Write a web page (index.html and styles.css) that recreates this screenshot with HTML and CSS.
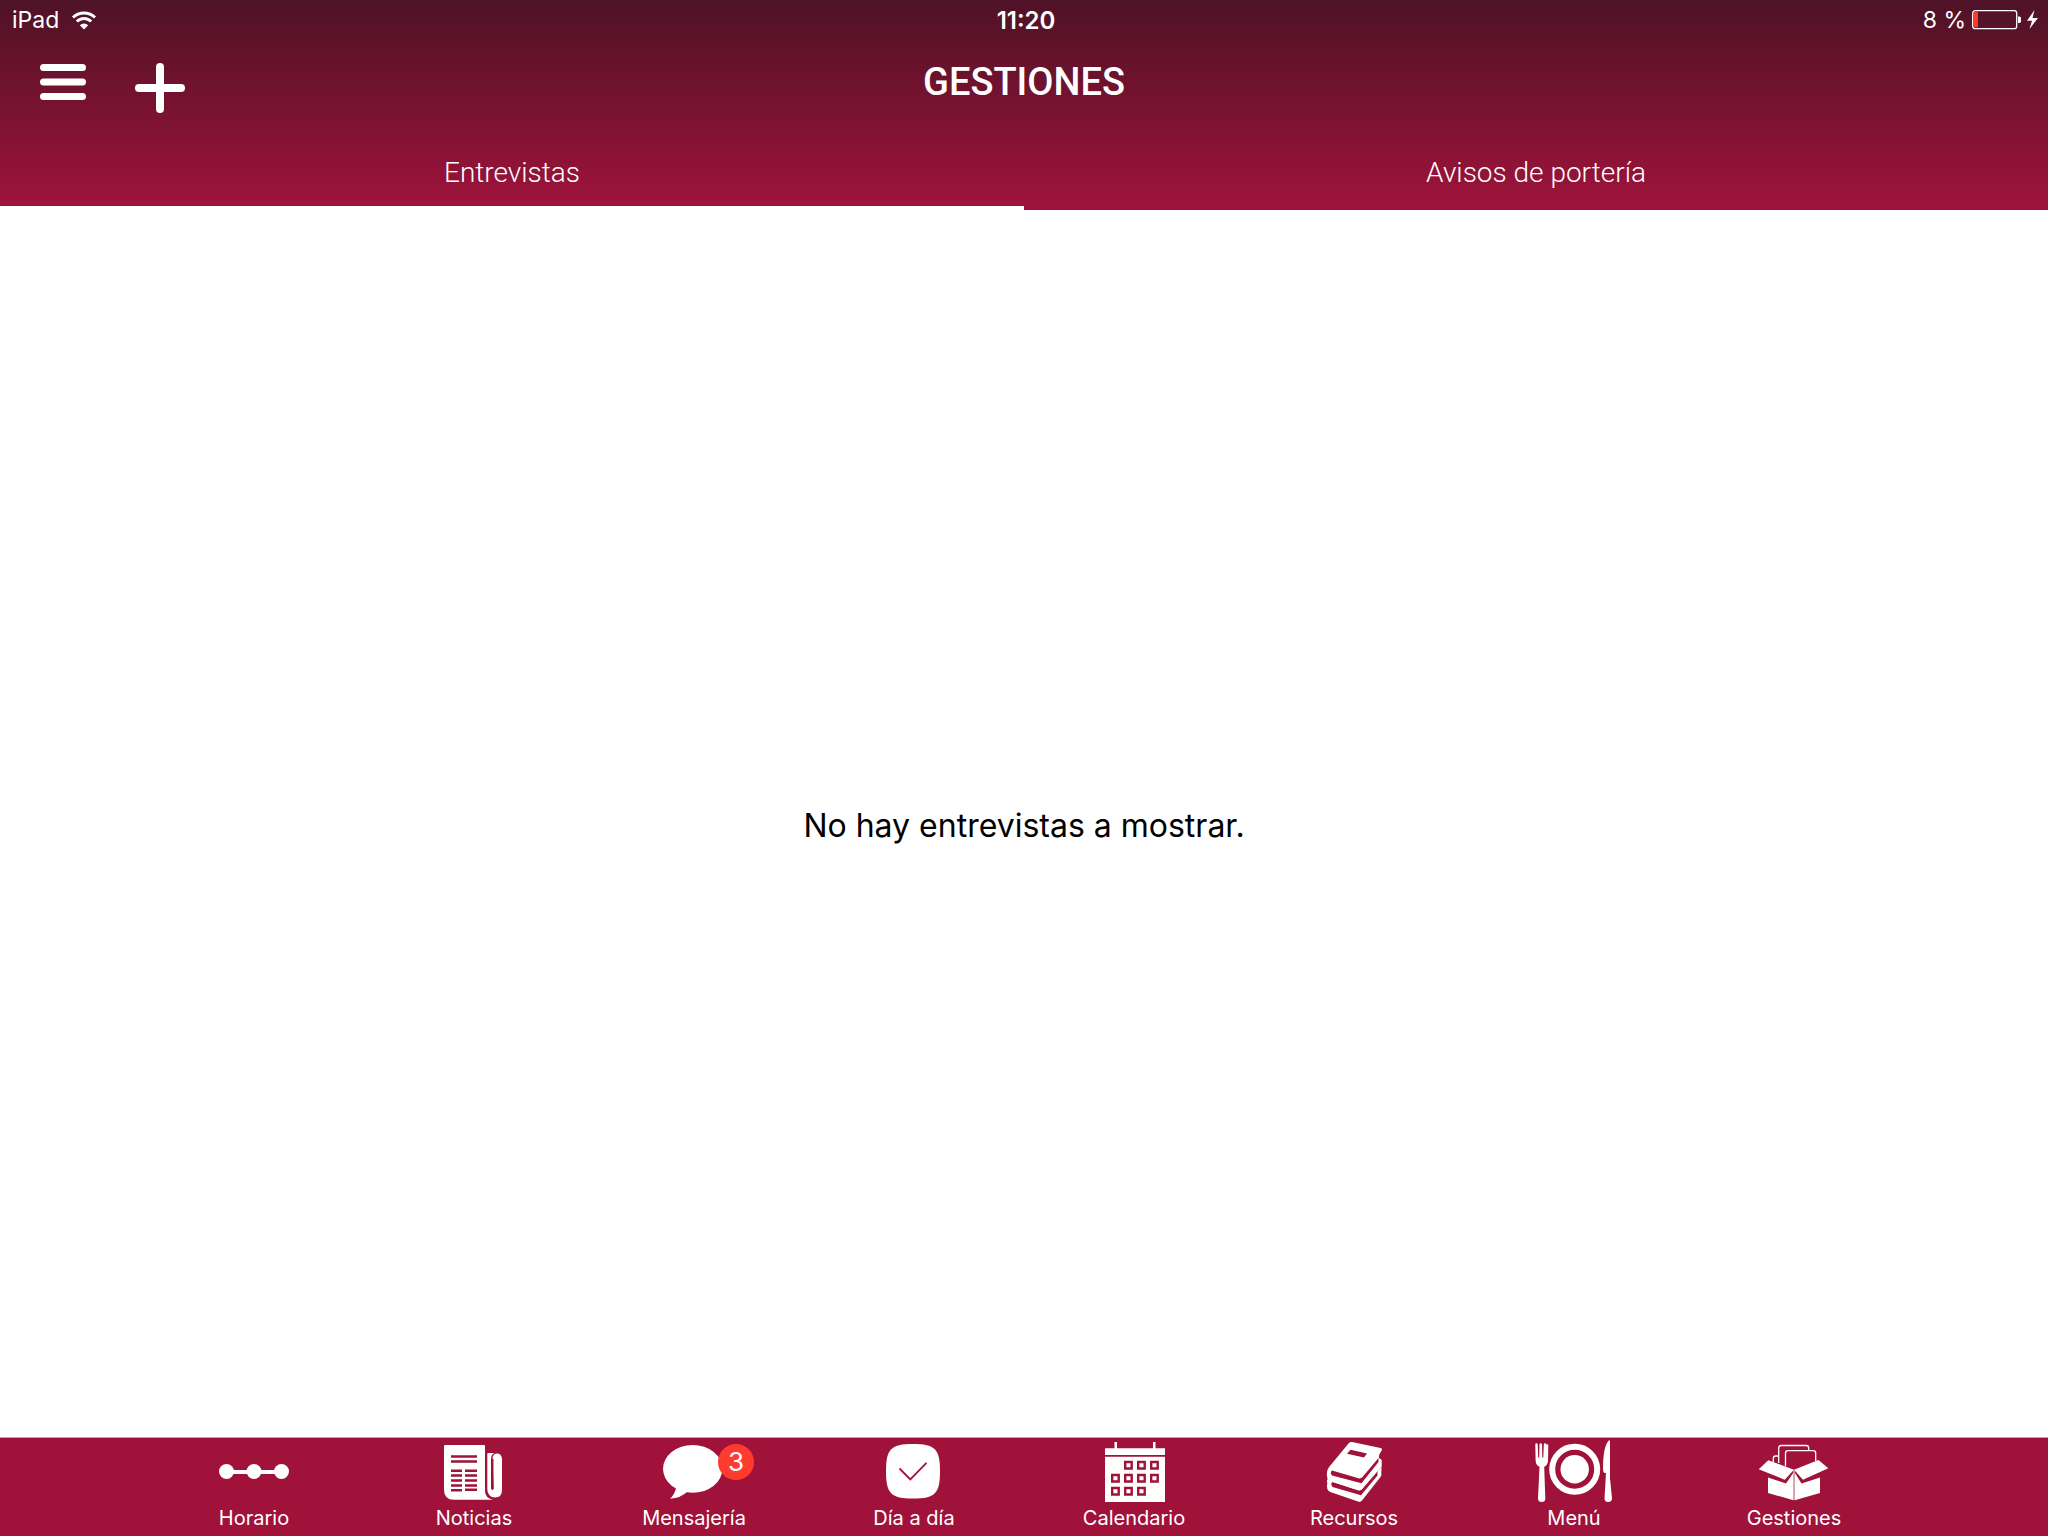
FILE: index.html
```
<!DOCTYPE html>
<html lang="es">
<head>
    <meta charset="UTF-8">
    <meta name="viewport" content="width=device-width, initial-scale=1.0">
    <title>Gestiones</title>
    <link rel="stylesheet" href="styles.css">
</head>
<body>
    <header class="header">
        <div class="status-bar">
            <div class="status-left">
                <span>iPad</span>
                <svg class="wifi" viewBox="0 0 26 20" aria-hidden="true">
                    <path d="M2 7.500a15.500 15.500 0 0 1 22 0" fill="none" stroke="#fff" stroke-width="3"/>
                    <path d="M5.800 11.500a10 10 0 0 1 14.400 0" fill="none" stroke="#fff" stroke-width="3"/>
                    <path d="M13 19.500l-4.200-4.300a6 6 0 0 1 8.400 0z" fill="#fff"/>
                </svg>
            </div>
            <span class="clock">11:20</span>
            <div class="status-right">
                <span>8 %</span>
                <svg class="battery" viewBox="0 0 68 20" aria-hidden="true">
                    <rect x="0.700" y="0.700" width="44" height="18" rx="2.500" fill="none" stroke="#fff" stroke-width="1.300"/>
                    <rect x="2" y="2" width="4" height="15.500" rx="1" fill="#ff3b30"/>
                    <path d="M46 6.500h1.500a2 2 0 0 1 1.500 1.500v3.500a2 2 0 0 1-1.500 1.500H46z" fill="#fff"/>
                    <path d="M62.500 0L55 10.700h5L57.500 19 66 8h-5.500z" fill="#fff"/>
                </svg>
            </div>
        </div>

        <div class="nav-bar">
            <div class="nav-actions">
                <button type="button" class="icon-button" aria-label="Abrir menú">
                    <svg class="menu-icon" viewBox="0 0 46 36" fill="#fff">
                        <rect width="46" height="7" rx="3.500"/>
                        <rect y="14.500" width="46" height="7" rx="3.500"/>
                        <rect y="29" width="46" height="7" rx="3.500"/>
                    </svg>
                </button>
                <button type="button" class="icon-button" aria-label="Añadir">
                    <svg class="plus-icon" viewBox="0 0 50 62" fill="#fff">
                        <rect x="21" y="12" width="8" height="50" rx="4"/>
                        <rect y="33" width="50" height="8" rx="4"/>
                    </svg>
                </button>
            </div>
            <h1 class="title">GESTIONES</h1>
        </div>

        <div class="tabs" role="tablist">
            <button type="button" class="tab active" role="tab" aria-selected="true">Entrevistas</button>
            <button type="button" class="tab" role="tab" aria-selected="false">Avisos de portería</button>
        </div>
    </header>

    <main class="content">
        <p class="empty-message">No hay entrevistas a mostrar.</p>
    </main>

    <nav class="tab-bar">
        <a href="#horario" class="tab-item">
            <svg class="tab-icon" viewBox="0 0 80 64" fill="#fff">
                <path d="M12 30h56v4H12z"/>
                <circle cx="12.500" cy="31.500" r="7.500"/>
                <circle cx="40" cy="31.500" r="7.500"/>
                <circle cx="67.500" cy="31.500" r="7.500"/>
            </svg>
            <span>Horario</span>
        </a>
        <a href="#noticias" class="tab-item">
            <svg class="tab-icon" viewBox="0 0 80 64" fill="#fff">
                <path d="M11 5h39q1 0 1 1v45q0 7 8 8.700H20q-10 0-10-10V6q0-1 1-1z"/>
                <path d="M54 13h6q-3 2-3 6v31q0 5 3 7-6.700-1-6.700-8V14q0-1 .7-1z"/>
                <path d="M58.500 19q0-5.500 4.500-5.500t5 5.500v31q0 7.500-7 7.500-6.500 0-6.500-8V24h2.500v24q0 2 1.300 2t1.400-2z"/>
                <path d="M58.700 19v30" stroke="#a0123a" stroke-width="1.500"/>
                <g stroke="#a0123a" stroke-width="2.500">
                    <path d="M17 16.500h26M17 21.500h26"/>
                    <path d="M17 30.700h11M17 35.600h11M17 40.500h11M17 45.400h11M17 50.300h11"/>
                    <path d="M31 30.700h12M31 35.600h12M31 40.500h12M31 45.400h12M31 49.800h12"/>
                </g>
            </svg>
            <span>Noticias</span>
        </a>
        <a href="#mensajeria" class="tab-item">
            <svg class="tab-icon" viewBox="0 0 80 64" fill="#fff">
                <ellipse cx="38.700" cy="28.800" rx="29.700" ry="23.900"/>
                <path d="M22 45v3.500q-1.500 6-6 10.300 11-.8 17.500-7.300z"/>
            </svg>
            <span class="badge">3</span>
            <span>Mensajería</span>
        </a>
        <a href="#dia" class="tab-item">
            <svg class="tab-icon" viewBox="0 0 80 64" fill="#fff">
                <path d="M39 4c22 0 27 5 27 27.300S61 58.600 39 58.600 12 53.600 12 31.300 17 4 39 4z"/>
                <path d="M26 29l10.300 10.500L52 23.300" fill="none" stroke="#a0123a" stroke-width="1.800" stroke-linecap="round"/>
            </svg>
            <span>Día a día</span>
        </a>
        <a href="#calendario" class="tab-item">
            <svg class="tab-icon" viewBox="0 0 80 64" fill="#fff">
                <path d="M20.500 2H23v7h-2.500zM59 2h2.500v7H59zM11 8.300h60V15H11zM11 16.700h60V62H11z"/>
                <g fill="none" stroke="#a0123a" stroke-width="2.400">
                    <path d="M31.200 22h6.500v6.500h-6.500zM44.200 22h6.500v6.500h-6.500zM57.200 22h6.500v6.500h-6.500z"/>
                    <path d="M18.200 35h6.500v6.500h-6.500zM31.200 35h6.500v6.500h-6.500zM44.200 35h6.500v6.500h-6.500zM57.200 35h6.500v6.500h-6.500z"/>
                    <path d="M18.200 48h6.500v6.500h-6.500zM31.200 48h6.500v6.500h-6.500zM44.200 48h6.500v6.500h-6.500z"/>
                </g>
            </svg>
            <span>Calendario</span>
        </a>
        <a href="#recursos" class="tab-item">
            <svg class="tab-icon" viewBox="0 0 80 64" fill="#fff">
                <!-- lower book -->
                <path d="M15 38q-3 1.500-1.700 5-1.500 7 3 9L44 61.500q2.500.8 4-1L66.500 37q1.500-2 .8-4l.3-6L47 48z"/>
                <path d="M18.500 42L44 50.300q2.500.7 4-1.300l15.500-19v5.500L47 55.300 18.500 47q-2.500-3 0-5z" fill="#a0123a"/>
                <!-- upper book -->
                <path d="M34.500 3.500Q35.700 1.500 38 2l28.500 6q2.500.6 1 2.800L65.500 14q-1.200 3 0 4.500 2.500.5 2.200 3v5L48 49.200q-1.500 1.600-3.500 1L16 41q-4-2-3-9 .3-3 2.500-5.500z"/>
                <path d="M18 30.500l26.500 7.800q2.300.6 4-1.300L64.500 18v4L47.500 43.300 18 35.500q-2.500-3 0-5z" fill="#a0123a"/>
                <path d="M36.500 9.700l16.500 3.800-3 4-17-3.800z" fill="#a0123a"/>
            </svg>
            <span>Recursos</span>
        </a>
        <a href="#menu" class="tab-item">
            <svg class="tab-icon" viewBox="0 0 80 64" fill="#fff">
                <circle cx="40.700" cy="29.300" r="22.500" fill="none" stroke="#fff" stroke-width="6"/>
                <circle cx="40.700" cy="29.300" r="14.200"/>
                <path d="M1.300 4.500q0-1.300 1.200-1.300t1.200 1.300l.5 13h1l.3-13q0-1.300 1.200-1.300T8 4.500l.3 13h1l.5-13q0-1.300 1.200-1.300t1.400 1.300h0q1.900-1 1.900 1l-.3 15q0 4-3.800 6.500l1.100 31.500q0 3.500-3.600 3.500T4 58.500L5.500 27Q1.800 25 1.600 20.500z"/>
                <path d="M75 .3q1 0 1 1v37l2 20q0 3.700-3.800 3.700t-3.700-3.700L72 33h-1.500Q69 32 69 29q0-23 6-28.700z"/>
            </svg>
            <span>Menú</span>
        </a>
        <a href="#gestiones" class="tab-item">
            <svg class="tab-icon" viewBox="0 0 80 64" fill="#fff">
                <g fill="none" stroke="#fff" stroke-width="1.300">
                    <path d="M19.300 22v-3.500q0-2.500 2.500-2.500h2.500"/>
                    <path d="M24.700 23V8q0-2.500 2.500-2.500h25Q54.700 5.500 54.700 8v2.700"/>
                    <path d="M31.500 26V13.200q0-2.500 2.500-2.500h25.200q2.500 0 2.500 2.500V21"/>
                </g>
                <path d="M14.300 20.300L40 29.700 30.700 39.700 4.700 29.300zM64.500 20L40 29.700l9 10L74.300 28.300z"/>
                <path d="M14 37.500L32 43.500 39.500 32.500V60.300L14 53zM66 37.500L47.500 43.500 40.700 32.500V60.300L66 53z"/>
                <path d="M40 30v30" stroke="#e3b5c3" stroke-width="1.500"/>
            </svg>
            <span>Gestiones</span>
        </a>
    </nav>
</body>
</html>
```
FILE: styles.css
```
* {
    box-sizing: border-box;
}
body {
    font-family: Inter, "Noto Sans", sans-serif;
    display: flex;
    flex-direction: column;
    min-height: 100vh;
    margin: 0;
    background-color: white;
    color: #000;
}
button {
    background: none;
    border: none;
    padding: 0;
    color: white;
    cursor: pointer;
}
svg {
    display: block;
}
.header {
    background: linear-gradient(#4e1226, #a0133b);
    color: white;
}
.status-bar {
    display: grid;
    grid-template-columns: 1fr auto 1fr;
    align-items: center;
    height: 40px;
    padding: 0 8px 0 12px;
    font-size: 23px;
}
.status-left,
.status-right {
    display: flex;
    align-items: center;
    gap: 12px;
}
.status-right {
    justify-content: flex-end;
    gap: 6px;
}
.clock {
    font-size: 24px;
    font-weight: 600;
}
.wifi {
    width: 26px;
    height: 20px;
}
.battery {
    width: 68px;
    height: 20px;
}
.nav-bar {
    display: grid;
    grid-template-columns: 1fr auto 1fr;
    align-items: center;
    height: 84px;
    padding: 0 40px;
}
.nav-actions {
    display: flex;
    align-items: center;
    gap: 49px;
}
.menu-icon {
    width: 46px;
    height: 36px;
}
.plus-icon {
    width: 50px;
    height: 62px;
}
.title {
    margin: 0;
    font-family: Roboto, sans-serif;
    font-size: 38px;
    font-weight: 500;
}
.tabs {
    display: flex;
    height: 86px;
}
.tab {
    flex: 1;
    padding-top: 14px;
    border-bottom: 4px solid transparent;
    font-family: Roboto, sans-serif;
    font-size: 28px;
    font-weight: 300;
}
.tab.active {
    border-bottom-color: white;
}
.content {
    flex: 1;
    display: flex;
    justify-content: center;
    align-items: center;
    padding-top: 4px;
}
.empty-message {
    margin: 0;
    font-size: 32px;
}
.tab-bar {
    display: flex;
    justify-content: center;
    gap: 68px;
    padding: 2px 0 6px;
    border-top: 1px solid #b0a5a9;
    background-color: #a0123a;
}
.tab-item {
    position: relative;
    display: flex;
    flex-direction: column;
    align-items: center;
    gap: 2px;
    width: 152px;
    color: white;
    font-size: 20px;
    line-height: 24px;
    text-decoration: none;
}
.tab-icon {
    width: 80px;
    height: 64px;
}
.badge {
    position: absolute;
    top: 4px;
    left: 100px;
    width: 36px;
    height: 36px;
    border-radius: 50%;
    background-color: #ff3b30;
    font-size: 26px;
    line-height: 36px;
    text-align: center;
}
```
